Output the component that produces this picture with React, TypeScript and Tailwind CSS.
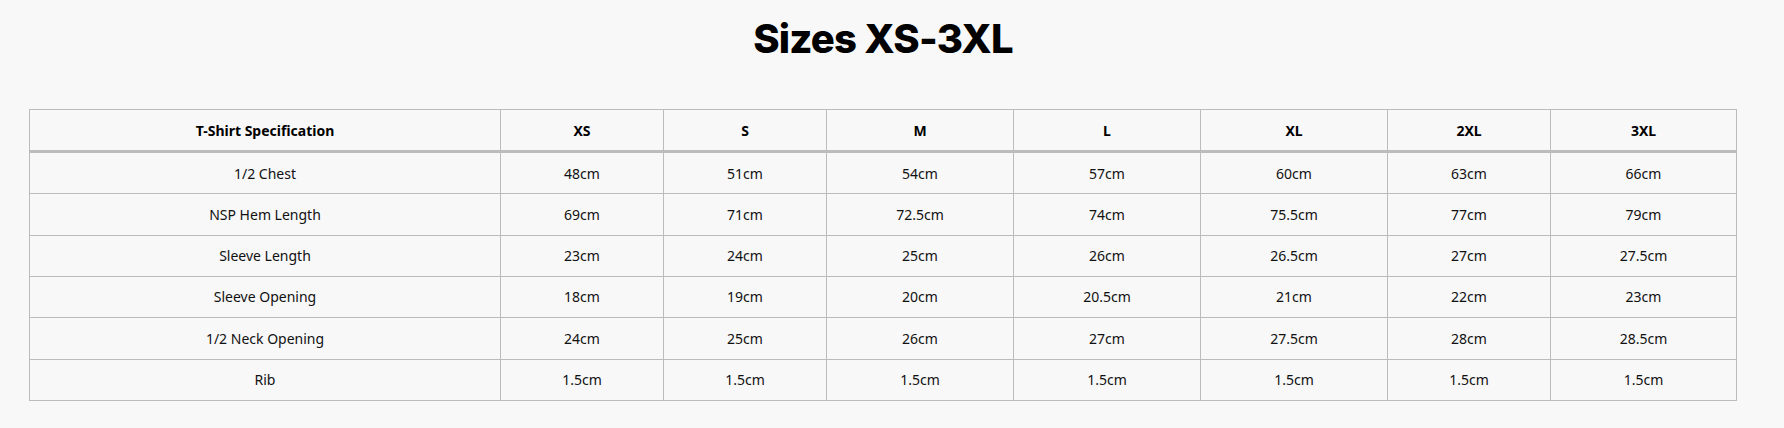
import React from "react";

const sizes = ["XS", "S", "M", "L", "XL", "2XL", "3XL"];
const rows: [string, string[]][] = [
  ["1/2 Chest", ["48cm", "51cm", "54cm", "57cm", "60cm", "63cm", "66cm"]],
  ["NSP Hem Length", ["69cm", "71cm", "72.5cm", "74cm", "75.5cm", "77cm", "79cm"]],
  ["Sleeve Length", ["23cm", "24cm", "25cm", "26cm", "26.5cm", "27cm", "27.5cm"]],
  ["Sleeve Opening", ["18cm", "19cm", "20cm", "20.5cm", "21cm", "22cm", "23cm"]],
  ["1/2 Neck Opening", ["24cm", "25cm", "26cm", "27cm", "27.5cm", "28cm", "28.5cm"]],
  ["Rib", ["1.5cm", "1.5cm", "1.5cm", "1.5cm", "1.5cm", "1.5cm", "1.5cm"]],
];

export default function App() {
  return (
    <div className="min-h-[428px] w-full bg-[#f8f8f8]">
      <div className="w-[1766px] pt-[15px]">
        <h1 className="text-center font-['Inter',sans-serif] text-[40px] font-extrabold leading-[48px] tracking-[-0.8px] text-black">
          Sizes XS-3XL
        </h1>
        <table className="mx-auto mt-[46px] w-[1707px] table-fixed border-collapse border border-[#bcbcbc] font-['Noto_Sans',sans-serif] text-[14px] text-[#111]">
          <colgroup>
            <col className="w-[471px]" />
            <col className="w-[163px]" />
            <col className="w-[163px]" />
            <col className="w-[187px]" />
            <col className="w-[187px]" />
            <col className="w-[187px]" />
            <col className="w-[163px]" />
            <col className="w-[186px]" />
          </colgroup>
          <thead>
            <tr>
              <th className="border border-b-[3px] border-[#bcbcbc] py-[11.5px] text-center font-bold leading-[17px] text-black">
                T-Shirt Specification
              </th>
              {sizes.map((s) => (
                <th
                  key={s}
                  className="border border-b-[3px] border-[#bcbcbc] py-[11.5px] text-center font-bold leading-[17px] text-black"
                >
                  {s}
                </th>
              ))}
            </tr>
          </thead>
          <tbody>
            {rows.map(([label, vals]) => (
              <tr key={label}>
                <td className="border border-[#bcbcbc] py-[11.5px] text-center leading-[17.33px]">{label}</td>
                {vals.map((v, i) => (
                  <td key={i} className="border border-[#bcbcbc] py-[11.5px] text-center leading-[17.33px]">
                    {v}
                  </td>
                ))}
              </tr>
            ))}
          </tbody>
        </table>
      </div>
    </div>
  );
}
